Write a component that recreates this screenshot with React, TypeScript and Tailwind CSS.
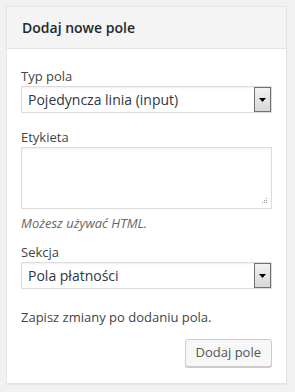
import React from "react";

function SelectBox({ value }: { value: string }) {
  return (
    <div className="flex h-[27px] items-stretch border border-[#dddddd] bg-white shadow-[inset_0_1px_2px_rgba(0,0,0,0.07)]">
      <div className="flex flex-1 items-center pl-[6px] text-[14px] leading-none text-[#32373c]">{value}</div>
      <div className="m-0 flex w-[17px] items-center justify-center border border-[#707070] bg-gradient-to-b from-[#f2f2f2] to-[#d8d8d8]">
        <svg width="7" height="4" viewBox="0 0 7 4">
          <path d="M0 0H7L3.5 4Z" fill="#000" />
        </svg>
      </div>
    </div>
  );
}

export default function App() {
  return (
    <div className="min-h-[392px] w-[295px] bg-[#f1f1f1] pt-[6px] pl-[6px] pr-[8px]" style={{ fontFamily: '"Open Sans", sans-serif' }}>
      <div className="border border-[#e5e5e5] bg-white shadow-[0_1px_1px_rgba(0,0,0,0.04)]">
        <div className="flex h-[42px] items-center border-b border-[#e5e5e5] bg-[#f4f4f4] px-[15px]">
          <h2 className="text-[14px] font-semibold text-[#23282d]">Dodaj nowe pole</h2>
        </div>
        <div className="px-[14px] pt-[17px] pb-[16px] text-[13px] text-[#444]">
          <div className="leading-[20px]">Typ pola</div>
          <SelectBox value="Pojedyncza linia (input)" />
          <div className="mt-[14px] leading-[20px]">Etykieta</div>
          <div className="relative h-[62px] border border-[#dddddd] bg-white shadow-[inset_0_1px_2px_rgba(0,0,0,0.07)]">
            <svg className="absolute right-[3px] bottom-[3px]" width="7" height="7" viewBox="0 0 7 7">
              <rect x="5" y="0" width="1" height="1" fill="#999" />
              <rect x="3" y="2" width="1" height="1" fill="#999" />
              <rect x="5" y="2" width="1" height="1" fill="#999" />
              <rect x="1" y="4" width="1" height="1" fill="#999" />
              <rect x="3" y="4" width="1" height="1" fill="#999" />
              <rect x="5" y="4" width="1" height="1" fill="#999" />
            </svg>
          </div>
          <div className="mt-[4px] leading-[20px] italic text-[#666]">Możesz używać HTML.</div>
          <div className="mt-[9px] leading-[20px]">Sekcja</div>
          <SelectBox value="Pola płatności" />
          <div className="mt-[18px] leading-[20px]">Zapisz zmiany po dodaniu pola.</div>
          <div className="mt-[12px] flex justify-end">
            <button className="h-[28px] rounded-[3px] border border-[#cccccc] bg-[#f7f7f7] px-[10px] text-[13px] text-[#555] shadow-[0_1px_0_#cccccc]">Dodaj pole</button>
          </div>
        </div>
      </div>
    </div>
  );
}
